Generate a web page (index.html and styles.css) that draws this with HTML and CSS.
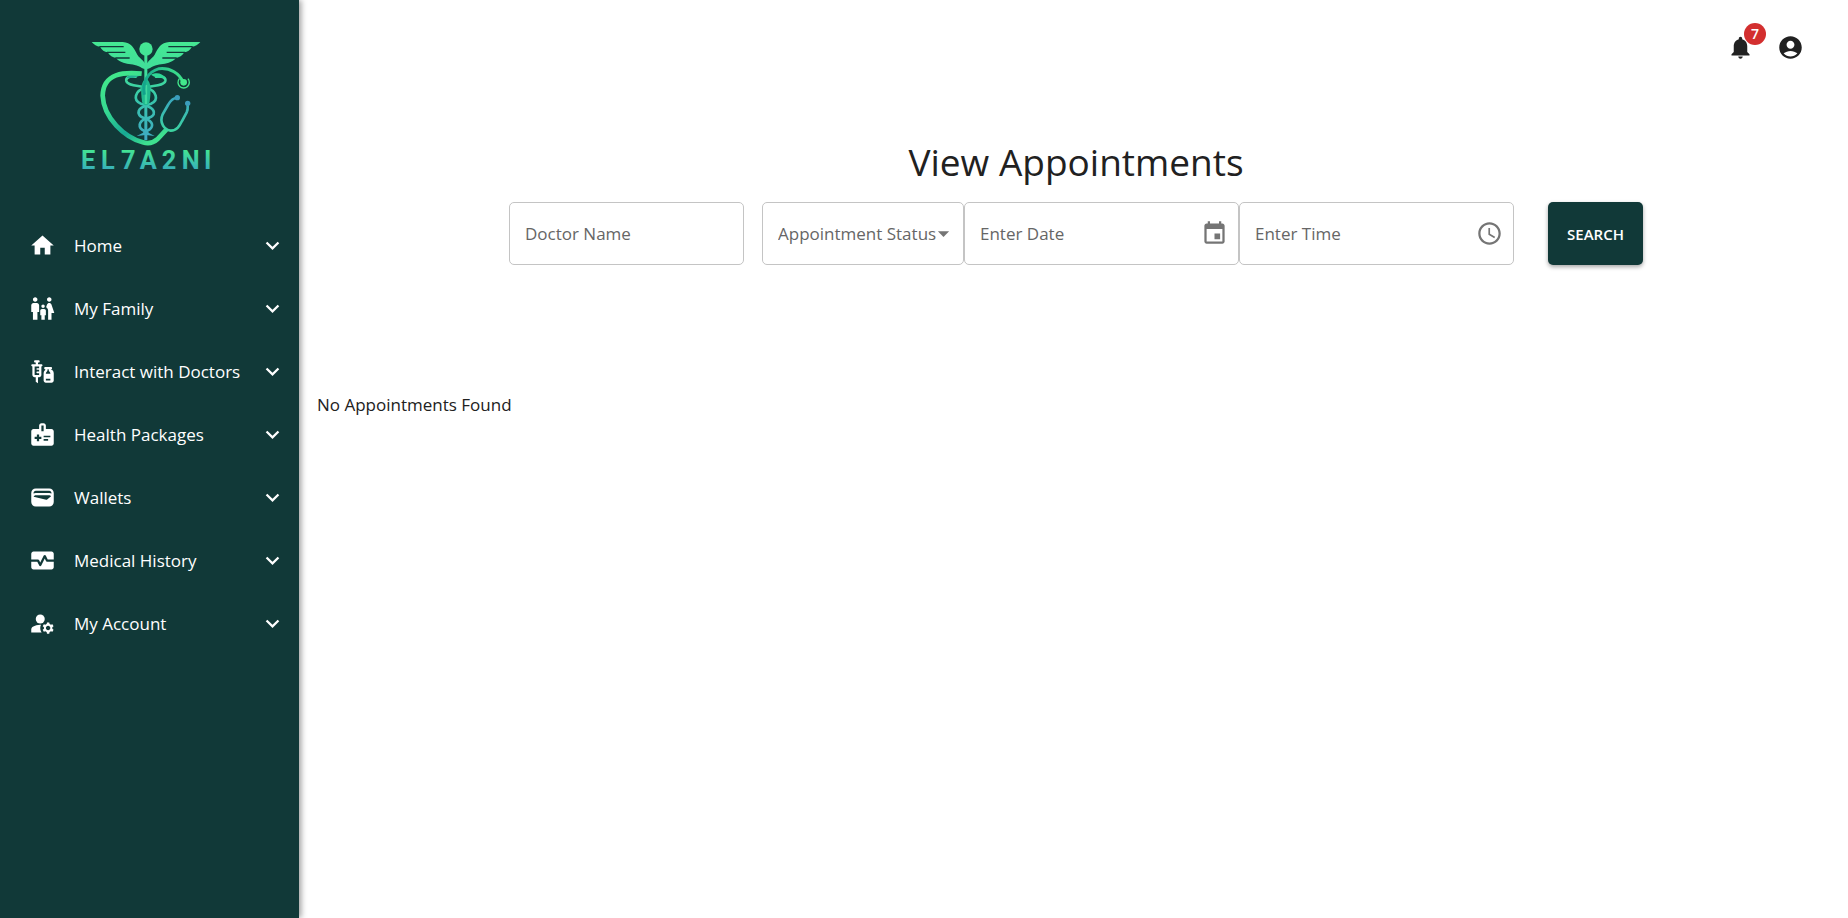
FILE: index.html
```html
<!DOCTYPE html>
<html lang="en">
<head>
<meta charset="utf-8">
<meta name="viewport" content="width=device-width, initial-scale=1">
<title>View Appointments</title>
<link rel="stylesheet" href="styles.css">
</head>
<body>
<svg class="sprite">
  <symbol id="chevron" viewBox="0 0 24 24"><path d="M7.41 8.59 12 13.17l4.59-4.58L18 10l-6 6-6-6 1.41-1.41z"/></symbol>
</svg>
<div class="app">
  <aside class="sidebar">
    <svg class="logo" viewBox="0 0 450 450" role="img" aria-label="EL7A2NI">
      <defs>
        <linearGradient id="wing" gradientUnits="userSpaceOnUse" x1="0" y1="36" x2="0" y2="330"><stop offset="0" stop-color="#45e893"/><stop offset=".35" stop-color="#3fdc9c"/><stop offset=".6" stop-color="#38c5ac"/><stop offset="1" stop-color="#3fa9c4"/></linearGradient>
        <linearGradient id="heart" gradientUnits="userSpaceOnUse" x1="110" y1="140" x2="230" y2="340"><stop offset="0" stop-color="#42e88b"/><stop offset=".4" stop-color="#35d892"/><stop offset=".75" stop-color="#17a894"/><stop offset="1" stop-color="#3ee08f"/></linearGradient>
        <linearGradient id="tube" gradientUnits="userSpaceOnUse" x1="220" y1="180" x2="350" y2="140"><stop offset="0" stop-color="#12a28c"/><stop offset="1" stop-color="#42e88b"/></linearGradient>
        <linearGradient id="scope" gradientUnits="userSpaceOnUse" x1="0" y1="200" x2="0" y2="345"><stop offset="0" stop-color="#3aa5c0"/><stop offset=".65" stop-color="#3bd0a4"/><stop offset="1" stop-color="#42e88b"/></linearGradient>
        <linearGradient id="word" gradientUnits="userSpaceOnUse" x1="0" y1="362" x2="0" y2="418"><stop offset="0" stop-color="#43e294"/><stop offset="1" stop-color="#37b0b9"/></linearGradient>
      </defs>
      <g fill="url(#wing)">
        <circle cx="228" cy="57" r="20"/>
        <path d="M223 72h9v40h-9z"/>
        <path d="M65 36H158C184 37 192 55 202 74C211 88 228 94 228 112C224 122 217 114 206 109C190 101 175 103 160 98C150 95 143 91 138 84C128 83 119 77 113 67C103 66 96 60 90 50C80 49 72 44 65 36Z"/>
        <path d="M391 36H298C272 37 264 55 254 74C245 88 228 94 228 112C232 122 239 114 250 109C266 101 281 103 296 98C306 95 313 91 318 84C328 83 337 77 343 67C353 66 360 60 366 50C376 49 384 44 391 36Z"/>
        <path d="M223 108h9v222h-9z"/>
        <path d="M228 296l9 13 17 9-26-3-28 3 18-9z"/>
      </g>
      <path class="feathers" d="M88 50H161M111 67H166M136 84H179M368 50H295M345 67H290M320 84H277"/>
      <g fill="none" stroke="url(#wing)" stroke-width="8" stroke-linecap="round">
        <path d="M197 140C177 136 167 144 169 153C173 168 205 166 226 172C262 183 267 211 243 221C223 228 200 235 207 253C210 261 218 263 226 266C250 273 253 292 233 302"/>
        <path d="M258 140C278 136 288 144 286 153C282 168 250 166 228 172C193 183 188 211 213 221C233 228 256 235 251 253C248 261 240 263 228 266C205 273 203 294 222 302"/>
      </g>
      <path d="M243 134C263 125 277 132 286 144C267 145 253 142 243 134Z" fill="#2fd997"/>
      <path d="M213 134C190 126 179 132 169 144C188 145 202 142 213 134Z" fill="#22ad93"/>
      <path d="M228 145C245 156 243 184 239 214C236 230 219 230 216 214C212 184 211 156 228 145Z" fill="#20b98f"/>
      <path d="M228 165V222" stroke="#3fd8a0" stroke-width="7"/>
      <path d="M215 131C164 126 100 128 98 197C101 265 164 322 218 337C238 343 250 339 262 328L289 299" fill="none" stroke="url(#heart)" stroke-width="14"/>
      <path d="M223 194C217 157 232 126 267 116C302 112 328 132 338 154" fill="none" stroke="url(#tube)" stroke-width="9"/>
      <path d="M328 146A17 17 0 1 0 354 146" fill="none" stroke="#42e88b" stroke-width="4"/><circle cx="341" cy="157" r="10" fill="#42e88b"/>
      <path d="M320 204C306 204 300 215 294 225L278 253C266 280 285 300 302 302C321 302 329 287 336 273L350 247C355 237 353 229 353 220" fill="none" stroke="url(#scope)" stroke-width="8"/>
      <circle cx="322" cy="203" r="8" fill="#3b9dbc"/><circle cx="353" cy="220" r="8" fill="#3b9dbc"/>
      <text class="logo-text" x="33 93 153 209 275 335 402" y="417" fill="url(#word)">EL7A2NI</text>
    </svg>
    <nav class="menu" aria-label="Main">
      <button class="menu-item" type="button"><svg class="icon" viewBox="0 0 24 24"><path d="M10 20v-6h4v6h5v-8h3L12 3 2 12h3v8z"/></svg><span class="menu-label">Home</span><svg class="icon"><use href="#chevron"/></svg></button>
      <button class="menu-item" type="button"><svg class="icon" viewBox="0 0 24 24"><path d="M16 4c0-1.11.89-2 2-2s2 .89 2 2-.89 2-2 2-2-.89-2-2zm4 18v-6h2.5l-2.54-7.63C19.68 7.55 18.92 7 18.06 7h-.12c-.86 0-1.63.55-1.9 1.37l-.86 2.58c1.08.6 1.82 1.73 1.82 3.05v8h3zm-7.5-10.5c.83 0 1.5-.67 1.5-1.5s-.67-1.5-1.5-1.5S11 9.17 11 10s.67 1.5 1.5 1.5zM5.5 6c1.11 0 2-.89 2-2s-.89-2-2-2-2 .89-2 2 .89 2 2 2zm2 16v-7H9V9c0-1.1-.9-2-2-2H4c-1.1 0-2 .9-2 2v6h1.5v7h4zm6.5 0v-4h1v-4c0-.82-.68-1.5-1.5-1.5h-2c-.82 0-1.5.68-1.5 1.5v4h1v4h3z"/></svg><span class="menu-label">My Family</span><svg class="icon"><use href="#chevron"/></svg></button>
      <button class="menu-item" type="button"><svg class="icon" viewBox="0 0 24 24"><path d="M11 5.5H8V4h.5c.55 0 1-.45 1-1s-.45-1-1-1h-3c-.55 0-1 .45-1 1s.45 1 1 1H6v1.5H3c-.55 0-1 .45-1 1s.45 1 1 1V15c0 1.1.9 2 2 2h1v4l2 1.5V17h1c1.1 0 2-.9 2-2V7.5c.55 0 1-.45 1-1s-.45-1-1-1zM9 9H7.25c-.41 0-.75.34-.75.75s.34.75.75.75H9V12H7.25c-.41 0-.75.34-.75.75s.34.75.75.75H9V15H5V7.5h4V9zm10.5 1.5V10c.55 0 1-.45 1-1s-.45-1-1-1h-5c-.55 0-1 .45-1 1s.45 1 1 1v.5c0 .5-1.5 1.16-1.5 3V20c0 1.1.9 2 2 2h5c1.1 0 2-.9 2-2v-6.5c0-1.84-1.5-2.5-1.5-3zm-3 0V10h1v.5c0 1.6 1.5 2 1.5 3v.5h-4v-.5c0-1 1.5-1.4 1.5-3zM15 20v-1.500h4V20h-4z"/></svg><span class="menu-label">Interact with Doctors</span><svg class="icon"><use href="#chevron"/></svg></button>
      <button class="menu-item" type="button"><svg class="icon" viewBox="0 0 24 24"><path d="M20 7h-5V4c0-1.100-.9-2-2-2h-2c-1.100 0-2 .9-2 2v3H4c-1.100 0-2 .9-2 2v11c0 1.100.9 2 2 2h16c1.100 0 2-.9 2-2V9c0-1.100-.9-2-2-2zm-9-3h2v5h-2V4zm0 12H9v2H7v-2H5v-2h2v-2h2v2h2v2zm2-1.500V13h6v1.500h-6zm0 3V16h4v1.500h-4z"/></svg><span class="menu-label">Health Packages</span><svg class="icon"><use href="#chevron"/></svg></button>
      <button class="menu-item" type="button"><svg class="icon" viewBox="0 0 24 24"><path d="M18 4H6C3.790 4 2 5.790 2 8v8c0 2.210 1.790 4 4 4h12c2.210 0 4-1.790 4-4V8c0-2.210-1.790-4-4-4zm-1.860 9.770c-.24.2-.57.280-.88.2L4.150 11.250C4.450 10.520 5.160 10 6 10h12c.67 0 1.260.34 1.630.84l-3.490 2.930zM6 6h12c1.100 0 2 .9 2 2v.55c-.59-.34-1.270-.55-2-.55H6c-.73 0-1.410.21-2 .55V8c0-1.100.9-2 2-2z"/></svg><span class="menu-label">Wallets</span><svg class="icon"><use href="#chevron"/></svg></button>
      <button class="menu-item" type="button"><svg class="icon" viewBox="0 0 24 24"><path d="M15.110 12.450 14 10.240l-3.110 6.210c-.16.34-.51.55-.89.55s-.73-.21-.89-.55L7.380 13H2v5c0 1.100.9 2 2 2h16c1.100 0 2-.9 2-2v-5h-6c-.38 0-.73-.21-.89-.55zM20 4H4c-1.100 0-2 .9-2 2v5h6c.38 0 .73.21.89.55L10 13.760l3.110-6.210c.34-.68 1.450-.68 1.790 0L16.620 11H22V6c0-1.100-.9-2-2-2z"/></svg><span class="menu-label">Medical History</span><svg class="icon"><use href="#chevron"/></svg></button>
      <button class="menu-item" type="button"><svg class="icon" viewBox="0 0 24 24"><circle cx="10" cy="8" r="4"/><path d="M10.670 13.020C10.450 13.010 10.230 13 10 13c-2.420 0-4.680.67-6.610 1.820-.88.52-1.390 1.500-1.390 2.530V20h9.260c-.79-1.130-1.260-2.510-1.260-4 0-1.070.25-2.070.67-2.980zM20.750 16c0-.22-.03-.42-.06-.63l1.140-1.010-1-1.730-1.450.49c-.32-.27-.68-.48-1.080-.63L18 11h-2l-.3 1.490c-.4.15-.76.36-1.080.63l-1.450-.49-1 1.730 1.140 1.010c-.03.21-.06.41-.06.63s.03.42.06.63l-1.140 1.010 1 1.730 1.450-.49c.32.27.68.48 1.080.63L16 21h2l.3-1.490c.4-.15.76-.36 1.080-.63l1.450.49 1-1.730-1.140-1.010c.03-.21.06-.41.06-.63zM17 18c-1.100 0-2-.9-2-2s.9-2 2-2 2 .9 2 2-.9 2-2 2z"/></svg><span class="menu-label">My Account</span><svg class="icon"><use href="#chevron"/></svg></button>
    </nav>
  </aside>
  <div class="content">
    <header class="topbar">
      <button class="icon-button" type="button" aria-label="Notifications"><svg class="icon" viewBox="0 0 24 24"><path d="M12 22c1.100 0 2-.9 2-2h-4c0 1.100.89 2 2 2zm6-6v-5c0-3.070-1.640-5.640-4.500-6.320V4c0-.83-.67-1.500-1.500-1.500s-1.500.67-1.500 1.500v.68C7.630 5.360 6 7.920 6 11v5l-2 2v1h16v-1l-2-2z"/></svg><span class="badge">7</span></button>
      <button class="icon-button" type="button" aria-label="Account"><svg class="icon" viewBox="0 0 24 24"><path d="M12 2C6.480 2 2 6.480 2 12s4.480 10 10 10 10-4.480 10-10S17.520 2 12 2zm0 4c1.930 0 3.500 1.570 3.500 3.500S13.930 13 12 13s-3.500-1.570-3.500-3.500S10.070 6 12 6zm0 14c-2.030 0-4.430-.82-6.140-2.880C7.550 15.800 9.680 15 12 15s4.450.8 6.140 2.120C16.430 19.180 14.030 20 12 20z"/></svg></button>
    </header>
    <main class="main">
      <h1 class="title">View Appointments</h1>
      <form class="search">
        <input class="field field-name" type="text" placeholder="Doctor Name" aria-label="Doctor Name">
        <div class="field-group">
          <div class="field field-status">
            <select class="control" aria-label="Appointment Status"><option>Appointment Status</option></select>
            <svg class="icon arrow" viewBox="0 0 24 24"><path d="M7 10l5 5 5-5z"/></svg>
          </div>
          <div class="field field-picker">
            <input class="control" type="text" placeholder="Enter Date" aria-label="Enter Date">
            <button class="picker-button" type="button" aria-label="Choose date"><svg class="icon" viewBox="0 0 24 24"><path d="M17 12h-5v5h5v-5zM16 1v2H8V1H6v2H5c-1.110 0-1.990.9-1.990 2L3 19c0 1.100.89 2 2 2h14c1.100 0 2-.9 2-2V5c0-1.100-.9-2-2-2h-1V1h-2zm3 18H5V8h14v11z"/></svg></button>
          </div>
          <div class="field field-picker">
            <input class="control" type="text" placeholder="Enter Time" aria-label="Enter Time">
            <button class="picker-button" type="button" aria-label="Choose time"><svg class="icon" viewBox="0 0 24 24"><path d="M11.990 2C6.470 2 2 6.480 2 12s4.470 10 9.990 10C17.520 22 22 17.520 22 12S17.520 2 11.990 2zM12 20c-4.420 0-8-3.580-8-8s3.580-8 8-8 8 3.580 8 8-3.580 8-8 8z"/><path d="M12.500 7H11v6l5.250 3.150.75-1.230-4.500-2.670z"/></svg></button>
          </div>
        </div>
        <button class="submit" type="submit">SEARCH</button>
      </form>
      <p class="empty">No Appointments Found</p>
    </main>
  </div>
</div>
</body>
</html>
```
FILE: styles.css
```css
* { box-sizing: border-box; }
body {
  margin: 0;
  background: #fff;
  color: #212121;
  font-family: "Open Sans", "Noto Sans", sans-serif;
  font-size: 17px;
}
button, input, select { font: inherit; }
button { border: 0; background: none; padding: 0; cursor: pointer; }
.sprite { display: none; }
.app { display: flex; min-height: 100vh; }
.icon { width: 27px; height: 27px; flex: none; fill: currentColor; display: block; }

.sidebar {
  flex: none;
  width: 299px;
  background: #113938;
  color: #fff;
  box-shadow: 2px 0 6px rgba(0, 0, 0, .4);
}
.logo { display: block; width: 150px; height: 150px; margin: 30px 0 0 70px; }
.logo-text { font-family: Roboto, sans-serif; font-weight: 700; font-size: 76px; }
.feathers { fill: none; stroke: #113938; stroke-width: 4; }
.menu { margin-top: 34px; }
.menu-item {
  display: flex;
  align-items: center;
  width: 100%;
  height: 63px;
  padding: 0 13px 0 29px;
  color: inherit;
  text-align: left;
}
.menu-label { flex: 1; padding-left: 18px; white-space: nowrap; }

.content { flex: 1; min-width: 0; padding-left: 5px; }
.topbar { display: flex; justify-content: flex-end; gap: 5px; padding: 25px 35px 0 0; }
.icon-button { position: relative; padding: 9px; color: #212121; }
.badge {
  position: absolute;
  top: -2px;
  right: -3px;
  width: 22px;
  height: 22px;
  border-radius: 50%;
  background: #d32f2f;
  color: #fff;
  font-size: 14px;
  font-weight: 600;
  line-height: 22px;
  text-align: center;
}

.main { padding-top: 65px; }
.title { margin: 0; font-size: 37px; font-weight: 400; line-height: 54px; text-align: center; }
.search { display: flex; justify-content: center; margin-top: 13px; }
.field {
  display: flex;
  align-items: center;
  height: 63px;
  border: 1px solid #c4c4c4;
  border-radius: 5px;
  background: #fff;
  color: #666;
}
.field-name { width: 235px; padding: 0 15px; margin-right: 18px; }
.field-group { display: flex; margin-right: 34px; }
.field-status { position: relative; width: 202px; }
.field-picker { width: 275px; padding-right: 10px; }
.control {
  flex: 1;
  min-width: 0;
  height: 100%;
  padding: 0 0 0 15px;
  border: 0;
  background: none;
  color: inherit;
  appearance: none;
}
.field::placeholder, .control::placeholder { color: #666; opacity: 1; }
.arrow { position: absolute; right: 6px; color: #757575; pointer-events: none; }
.picker-button { color: #757575; }
.submit {
  width: 95px;
  height: 63px;
  border-radius: 5px;
  background: #113938;
  color: #fff;
  font-size: 15px;
  font-weight: 600;
  box-shadow: 0 2px 4px rgba(0, 0, 0, .35);
}
.empty { margin: 128px 0 0 13px; line-height: 24px; }
```
